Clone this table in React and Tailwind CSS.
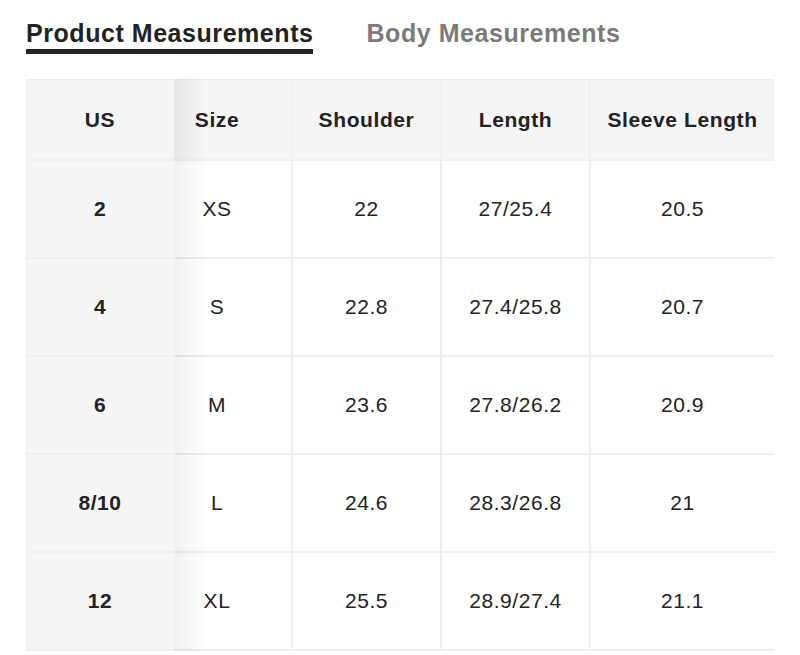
import React from "react";

const rows = [
  ["2", "XS", "22", "27/25.4", "20.5"],
  ["4", "S", "22.8", "27.4/25.8", "20.7"],
  ["6", "M", "23.6", "27.8/26.2", "20.9"],
  ["8/10", "L", "24.6", "28.3/26.8", "21"],
  ["12", "XL", "25.5", "28.9/27.4", "21.1"],
];

const cols = "grid grid-cols-[148px_119px_149px_149px_183px]";

export default function App() {
  return (
    <div
      className="w-[800px] h-[655px] bg-white text-[#222] overflow-hidden"
      style={{ fontFamily: '"Liberation Sans", Arial, sans-serif' }}
    >
      <div className="flex items-start gap-[53px] pl-[26px] pt-[17px]">
        <div className="flex flex-col">
          <span className="text-[25px] font-bold leading-[32px] tracking-[0.55px] text-[#222]">Product Measurements</span>
          <div className="h-[5px] bg-[#222]" />
        </div>
        <span className="text-[25px] font-bold leading-[32px] tracking-[0.55px] text-[#7a7a7a]">Body Measurements</span>
      </div>

      <div className="relative ml-[26px] mt-[25px] w-[748px]">
        <div className={`${cols} h-[82px] bg-[#f5f5f5] border-t border-[#ededed] border-b-2 border-b-[#efefef] text-[21px] tracking-[0.6px] font-bold`}>
          <div className="flex items-center justify-center">US</div>
          <div className="flex items-center justify-center pr-[31px] border-r-2 border-[#efefef]">Size</div>
          <div className="flex items-center justify-center border-r-2 border-[#efefef]">Shoulder</div>
          <div className="flex items-center justify-center border-r-2 border-[#efefef]">Length</div>
          <div className="flex items-center justify-center">Sleeve Length</div>
        </div>
        {rows.map((r, i) => (
          <div key={i} className={`${cols} h-[98px] border-b-2 border-[#efefef] text-[21px] tracking-[0.55px]`}>
            <div className="flex items-center justify-center bg-[#f5f5f5] font-bold">{r[0]}</div>
            <div className="flex items-center justify-center pr-[31px] border-r-2 border-[#efefef]">{r[1]}</div>
            <div className="flex items-center justify-center border-r-2 border-[#efefef]">{r[2]}</div>
            <div className="flex items-center justify-center border-r-2 border-[#efefef]">{r[3]}</div>
            <div className="flex items-center justify-center">{r[4]}</div>
          </div>
        ))}
        <div className="absolute top-0 bottom-0 left-[148px] w-[32px] bg-gradient-to-r from-black/[0.06] to-transparent pointer-events-none" />
      </div>
    </div>
  );
}
